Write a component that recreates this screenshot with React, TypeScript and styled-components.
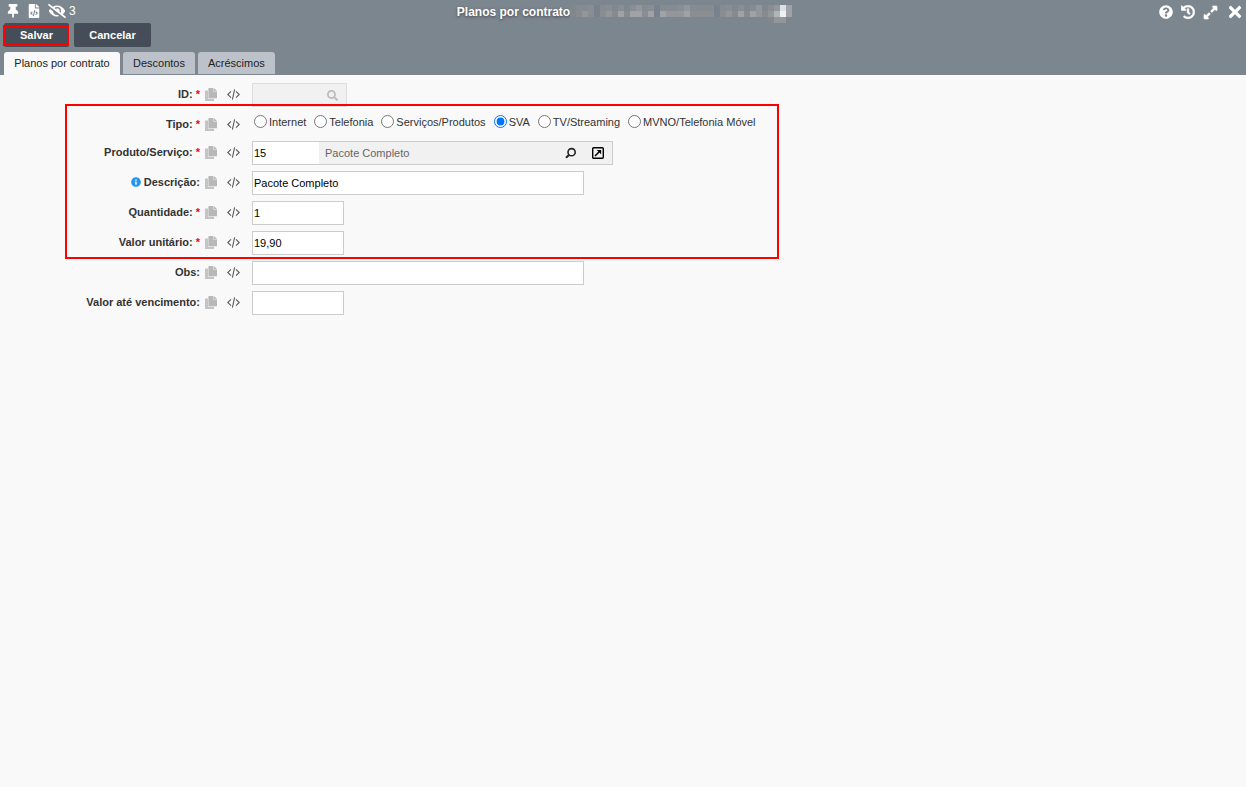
import React from 'react';
import styled, { createGlobalStyle, css } from 'styled-components';
import {
  FaThumbtack,
  FaFileCode,
  FaEyeSlash,
  FaQuestionCircle,
  FaHistory,
  FaTimes,
  FaExpandAlt,
  FaInfoCircle,
  FaSearch,
} from 'react-icons/fa';

const GlobalStyle = createGlobalStyle`
  *, *::after { box-sizing: border-box; }
  body {
    margin: 0;
    background: #f9f9f9;
    color: #333;
    font: 11px/14px "Liberation Sans", Arial, sans-serif;
  }
  button, input { font: inherit; }
  svg { display: block; }
`;

const Header = styled.header`
  background: #7c868f;
  color: #fff;
`;

const TitleBar = styled.div`
  display: grid;
  grid-template-columns: 1fr auto 1fr;
  align-items: start;
  height: 23px;
  padding: 0 2px;
`;

const Tools = styled.div<{ $end?: boolean }>`
  display: flex;
  align-items: center;
  justify-content: ${(p) => (p.$end ? 'flex-end' : 'flex-start')};
  gap: ${(p) => (p.$end ? '8px' : '7px')};
  padding: ${(p) => (p.$end ? '3px 0 0' : '2px 0 0 4px')};
`;

const IconButton = styled.button`
  display: flex;
  align-items: center;
  gap: 3px;
  padding: 0;
  border: 0;
  background: none;
  color: inherit;
  font-size: 12px;
`;

const Title = styled.h1`
  display: flex;
  margin: 0;
  padding: 5px 0 0 3px;
  font-size: 12px;
  line-height: 14px;
  text-shadow: 0 1px 3px #444;
`;

const Actions = styled.div`
  display: flex;
  gap: 5px;
  padding: 0 4px;
`;

const ActionButton = styled.button<{ $marked?: boolean }>`
  position: relative;
  height: 24px;
  min-width: ${(p) => (p.$marked ? '65px' : '77px')};
  padding: 0 14px;
  border: 0;
  border-radius: 2px;
  background: #454e58;
  color: #fff;
  font-weight: bold;
  ${(p) =>
    p.$marked &&
    css`
      &::after {
        content: '';
        position: absolute;
        inset: 2px 0 1px -1px;
        border: 2px solid #f00;
      }
    `}
`;

const Tabs = styled.div`
  display: flex;
  gap: 3px;
  height: 28px;
  padding: 5px 4px 0;
`;

const Tab = styled.button<{ $active?: boolean }>`
  height: ${(p) => (p.$active ? '23px' : '22px')};
  min-width: ${(p) => (p.$active ? '116px' : '72px')};
  padding: ${(p) => (p.$active ? '0 10px 1px' : '0 10px')};
  border: 0;
  border-radius: 3px 3px 0 0;
  background: ${(p) => (p.$active ? '#f9f9f9' : '#bdc2ca')};
  color: #222;
`;

const Form = styled.form`
  display: flex;
  flex-direction: column;
  gap: 6px;
  padding-top: 8px;
`;

const Highlight = styled.div`
  position: relative;
  display: flex;
  flex-direction: column;
  gap: 6px;
  &::after {
    content: '';
    position: absolute;
    top: -9px;
    bottom: -4px;
    left: 65px;
    width: 714px;
    border: 2px solid #f00;
    pointer-events: none;
  }
`;

const Row = styled.div<{ $short?: boolean }>`
  display: grid;
  grid-template-columns: 200px 40px 1fr;
  height: ${(p) => (p.$short ? '22px' : '24px')};
`;

const LabelCell = styled.div`
  display: flex;
  justify-content: flex-end;
  gap: 3px;
  padding-top: 4px;
  font-weight: bold;
`;

const Required = styled.span`
  color: #f00;
`;

const InfoIcon = styled(FaInfoCircle)`
  margin-top: 2px;
  color: #2196f3;
  font-size: 10px;
`;

const RowTools = styled.div`
  display: flex;
  align-items: flex-start;
  justify-content: space-between;
  padding: 5px 0 0 5px;
`;

const Field = styled.div`
  display: flex;
  align-items: flex-start;
  padding-left: 12px;
`;

const TextInput = styled.input<{ $width: number }>`
  width: ${(p) => p.$width}px;
  height: 24px;
  padding: 1px;
  border: 1px solid #ccc;
  background: #fff;
  color: #000;
`;

const LookupBox = styled.div<{ $width: number; $disabled?: boolean }>`
  display: flex;
  align-items: center;
  width: ${(p) => p.$width}px;
  height: 24px;
  border: 1px solid ${(p) => (p.$disabled ? '#ddd' : '#ccc')};
  background: #f1f1f1;
  color: ${(p) => (p.$disabled ? '#bbb' : '#222')};
`;

const LookupInput = styled.input`
  width: 66px;
  height: 22px;
  padding: 1px;
  border: 0;
  background: #fff;
  color: #000;
  &:disabled { background: transparent; }
`;

const LookupText = styled.span`
  flex: 1;
  padding-left: 6px;
  color: #666;
`;

const LookupButtons = styled.div`
  display: flex;
  gap: 15px;
  padding-right: 8px;
`;

const Radios = styled.div`
  display: flex;
  gap: 8px;
  padding: 2px 0 0 2px;
`;

const RadioLabel = styled.label`
  display: flex;
  gap: 2px;
  input { width: 13px; height: 13px; margin: 0; }
`;

/* Pixelated customer name: one letter per 6px block, "." is the bar itself. */
const shades: Record<string, string> = {
  n: '#78828e',
  a: '#80878d',
  b: '#868b90',
  c: '#8a8e93',
  d: '#93969a',
  e: '#9fa2a6',
  f: '#b0b5bb',
  g: '#dcdfe3',
  h: '#f0f1f3',
};

const blocks = [
  'abbcnbcacacdbcnbbbcdbbbbnbcacabdacdge',
  'abdcncdbebeecenedddeccccncdbebedbdfhe',
  '.................................add.',
];

const Mosaic = () => (
  <svg width="222" height="18" viewBox="0 0 222 18" shapeRendering="crispEdges" aria-hidden="true">
    {blocks.flatMap((line, y) =>
      [...line].map((shade, x) =>
        shade === '.' ? null : (
          <rect key={`${x}-${y}`} x={x * 6} y={y * 6} width="6" height="6" fill={shades[shade]} />
        ),
      ),
    )}
  </svg>
);

const CopyIcon = () => (
  <svg width="12" height="13" viewBox="0 0 12 13" aria-hidden="true">
    <path d="M.6 2.6H3v8.1h6V13H.6A.6.6 0 0 1 0 12.4V3.2A.6.6 0 0 1 .6 2.6z" fill="#c4c4c4" />
    <path d="M4 0h4.4v3.4H12v6.9H3.4V.6A.6.6 0 0 1 4 0z" fill="#b8b8b8" />
    <path d="M8.9 0L12 2.9H8.9z" fill="#b8b8b8" />
  </svg>
);

const CodeIcon = () => (
  <svg width="13" height="13" viewBox="0 0 13 13" fill="none" stroke="#5c5c5c" strokeWidth="1.1" aria-hidden="true">
    <path d="M4 3.4L.8 6.5 4 9.6M9 3.4l3.2 3.1L9 9.6M7.6 1.4L5.4 11.6" />
  </svg>
);

const LensIcon = () => (
  <svg width="12" height="12" viewBox="0 0 12 12" fill="none" stroke="currentColor" aria-hidden="true">
    <circle cx="6.6" cy="5.2" r="3.6" strokeWidth="1.6" />
    <path d="M4 8L1 10.8" strokeWidth="2" />
  </svg>
);

const OpenIcon = () => (
  <svg width="12" height="12" viewBox="0 0 12 12" fill="none" stroke="#000" aria-hidden="true">
    <rect x=".7" y=".7" width="10.6" height="10.6" rx="1" strokeWidth="1.4" />
    <path d="M3 9l4-4" strokeWidth="1.6" />
    <path d="M4.7 2.9h4.4v4.4z" fill="#000" stroke="none" />
  </svg>
);

type FormRowProps = {
  label: string;
  htmlFor?: string;
  required?: boolean;
  info?: boolean;
  short?: boolean;
  children: React.ReactNode;
};

const FormRow = ({ label, htmlFor, required, info, short, children }: FormRowProps) => (
  <Row $short={short}>
    <LabelCell>
      {info && <InfoIcon />}
      {htmlFor ? <label htmlFor={htmlFor}>{label}</label> : <span id="tipo-label">{label}</span>}
      {required && <Required>*</Required>}
    </LabelCell>
    <RowTools>
      <IconButton type="button" aria-label="Copiar"><CopyIcon /></IconButton>
      <IconButton type="button" aria-label="Código"><CodeIcon /></IconButton>
    </RowTools>
    <Field>{children}</Field>
  </Row>
);

const tipos = ['Internet', 'Telefonia', 'Serviços/Produtos', 'SVA', 'TV/Streaming', 'MVNO/Telefonia Móvel'];

export default function App() {
  return (
    <>
      <GlobalStyle />
      <Header>
        <TitleBar>
          <Tools>
            <IconButton aria-label="Fixar"><FaThumbtack size={14} /></IconButton>
            <IconButton aria-label="Arquivo"><FaFileCode size={14} /></IconButton>
            <IconButton aria-label="Ocultos"><FaEyeSlash size={18} />3</IconButton>
          </Tools>
          <Title>Planos por contrato<Mosaic /></Title>
          <Tools $end>
            <IconButton aria-label="Ajuda"><FaQuestionCircle size={14} /></IconButton>
            <IconButton aria-label="Histórico"><FaHistory size={14} strokeWidth={20} /></IconButton>
            <IconButton aria-label="Expandir"><FaExpandAlt size={15} strokeWidth={20} /></IconButton>
            <IconButton aria-label="Fechar"><FaTimes size={18} /></IconButton>
          </Tools>
        </TitleBar>
        <Actions>
          <ActionButton $marked>Salvar</ActionButton>
          <ActionButton>Cancelar</ActionButton>
        </Actions>
        <Tabs role="tablist">
          <Tab role="tab" aria-selected $active>Planos por contrato</Tab>
          <Tab role="tab">Descontos</Tab>
          <Tab role="tab">Acréscimos</Tab>
        </Tabs>
      </Header>
      <Form>
        <FormRow label="ID:" htmlFor="id" required>
          <LookupBox $width={95} $disabled>
            <LookupInput id="id" disabled />
            <LookupText />
            <LookupButtons><FaSearch size={11} /></LookupButtons>
          </LookupBox>
        </FormRow>
        <Highlight>
          <FormRow label="Tipo:" required short>
            <Radios role="radiogroup" aria-labelledby="tipo-label">
              {tipos.map((t) => (
                <RadioLabel key={t}>
                  <input type="radio" name="tipo" defaultChecked={t === 'SVA'} />
                  {t}
                </RadioLabel>
              ))}
            </Radios>
          </FormRow>
          <FormRow label="Produto/Serviço:" htmlFor="produto" required>
            <LookupBox $width={361}>
              <LookupInput id="produto" defaultValue="15" />
              <LookupText>Pacote Completo</LookupText>
              <LookupButtons>
                <IconButton type="button" aria-label="Pesquisar"><LensIcon /></IconButton>
                <IconButton type="button" aria-label="Abrir"><OpenIcon /></IconButton>
              </LookupButtons>
            </LookupBox>
          </FormRow>
          <FormRow label="Descrição:" htmlFor="descricao" info>
            <TextInput id="descricao" $width={332} defaultValue="Pacote Completo" />
          </FormRow>
          <FormRow label="Quantidade:" htmlFor="quantidade" required>
            <TextInput id="quantidade" $width={92} defaultValue="1" />
          </FormRow>
          <FormRow label="Valor unitário:" htmlFor="valor" required>
            <TextInput id="valor" $width={92} defaultValue="19,90" />
          </FormRow>
        </Highlight>
        <FormRow label="Obs:" htmlFor="obs">
          <TextInput id="obs" $width={332} />
        </FormRow>
        <FormRow label="Valor até vencimento:" htmlFor="vencimento">
          <TextInput id="vencimento" $width={92} />
        </FormRow>
      </Form>
    </>
  );
}
